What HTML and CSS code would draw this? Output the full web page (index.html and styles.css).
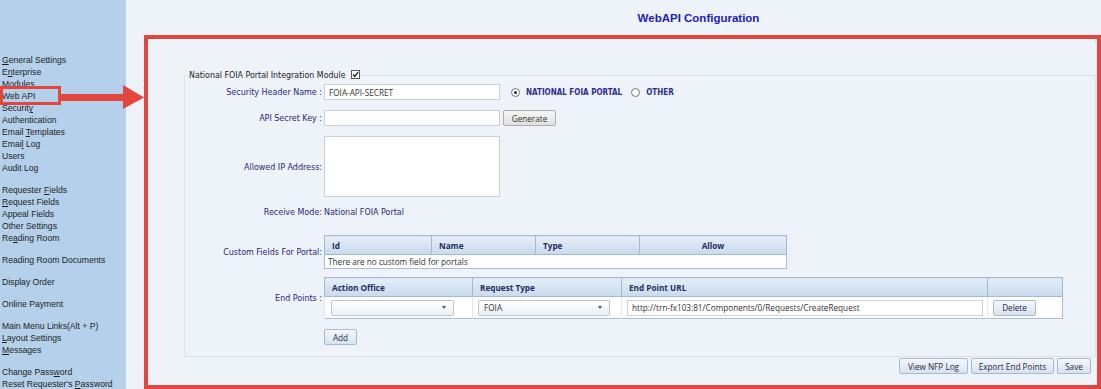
FILE: index.html
```html
<!DOCTYPE html>
<html>
<head>
    <meta charset="UTF-8">
    <title>WebAPI Configuration</title>
    <link rel="stylesheet" href="styles.css">
</head>
<body>
<div class="page">
    <nav class="sidebar">
        <ul class="menu-group">
            <li><u>G</u>eneral Settings</li>
            <li>E<u>n</u>terprise</li>
            <li>Modules</li>
            <li>Web API</li>
            <li>Securit<u>y</u></li>
            <li>Authentication</li>
            <li>Email <u>T</u>emplates</li>
            <li>Emai<u>l</u> Log</li>
            <li>Users</li>
            <li>Audit Log</li>
        </ul>
        <ul class="menu-group">
            <li>Requester <u>F</u>ields</li>
            <li><u>R</u>equest Fields</li>
            <li>Appeal Fields</li>
            <li>Other Settings</li>
            <li>Re<u>a</u>ding Room</li>
        </ul>
        <ul class="menu-group">
            <li>Reading Room Documents</li>
        </ul>
        <ul class="menu-group">
            <li>Display Order</li>
        </ul>
        <ul class="menu-group">
            <li>Online Payment</li>
        </ul>
        <ul class="menu-group">
            <li>Main Menu Links(Alt + P)</li>
            <li><u>L</u>ayout Settings</li>
            <li><u>M</u>essages</li>
        </ul>
        <ul class="menu-group">
            <li>Change Pass<u>w</u>ord</li>
            <li>Reset Requester's <u>P</u>assword</li>
        </ul>
    </nav>

    <main class="main">
        <h1 class="page-title">WebAPI Configuration</h1>

        <div class="content">
            <fieldset class="module">
                <legend>National FOIA Portal Integration Module
                    <svg class="checkbox" width="9" height="9" viewBox="0 0 9 9">
                        <rect x="0.5" y="0.5" width="8" height="8" fill="#fff" stroke="#555"/>
                        <path d="M2 4.5 L3.8 6.5 L7 2.2" fill="none" stroke="#222" stroke-width="1.3"/>
                    </svg>
                </legend>

                <div class="form-row row-header">
                    <label class="form-label">Security Header Name :</label>
                    <div class="control">
                        <input class="text-input" type="text" value="FOIA-API-SECRET">
                        <span class="radio-group">
                            <span class="radio checked"></span>
                            <span class="radio-text">NATIONAL FOIA PORTAL</span>
                            <span class="radio"></span>
                            <span class="radio-text">OTHER</span>
                        </span>
                    </div>
                </div>

                <div class="form-row row-key">
                    <label class="form-label">API Secret Key :</label>
                    <div class="control">
                        <input class="text-input" type="text">
                        <button class="btn btn-gray">Generate</button>
                    </div>
                </div>

                <div class="form-row row-ip">
                    <label class="form-label">Allowed IP Address:</label>
                    <div class="control">
                        <textarea class="text-area"></textarea>
                    </div>
                </div>

                <div class="form-row row-mode">
                    <label class="form-label">Receive Mode:</label>
                    <div class="control value-text">National FOIA Portal</div>
                </div>

                <div class="form-row row-fields">
                    <label class="form-label">Custom Fields For Portal:</label>
                    <div class="control">
                        <table class="grid grid-fields">
                            <colgroup>
                                <col style="width: 107px">
                                <col style="width: 104px">
                                <col style="width: 104px">
                                <col style="width: 147px">
                            </colgroup>
                            <tr>
                                <th>Id</th>
                                <th>Name</th>
                                <th>Type</th>
                                <th class="center">Allow</th>
                            </tr>
                            <tr>
                                <td colspan="4" class="empty-cell">There are no custom field for portals</td>
                            </tr>
                        </table>
                    </div>
                </div>

                <div class="form-row row-endpoints">
                    <label class="form-label">End Points :</label>
                    <div class="control">
                        <table class="grid grid-endpoints">
                            <colgroup>
                                <col style="width: 148px">
                                <col style="width: 149px">
                                <col style="width: 366px">
                                <col style="width: 75px">
                            </colgroup>
                            <tr>
                                <th>Action Office</th>
                                <th>Request Type</th>
                                <th>End Point URL</th>
                                <th></th>
                            </tr>
                            <tr>
                                <td><div class="select select-office"><span></span><i class="caret"></i></div></td>
                                <td><div class="select select-type"><span>FOIA</span><i class="caret"></i></div></td>
                                <td><input class="text-input url-input" type="text" value="http://trn-fx103:81/Components/0/Requests/CreateRequest"></td>
                                <td><button class="btn btn-blue btn-delete">Delete</button></td>
                            </tr>
                        </table>
                    </div>
                </div>

                <div class="form-row row-add">
                    <span></span>
                    <div class="control">
                        <button class="btn btn-blue btn-add">Add</button>
                    </div>
                </div>
            </fieldset>

            <div class="actions">
                <button class="btn btn-blue btn-log">View NFP Log</button>
                <button class="btn btn-blue btn-export">Export End Points</button>
                <button class="btn btn-blue btn-save">Save</button>
            </div>
        </div>
    </main>

    <!-- annotation overlay -->
    <div class="callout-frame"></div>
    <svg class="callout-arrow" width="150" height="120" viewBox="0 0 150 120">
        <rect x="1.5" y="87.5" width="58" height="16" fill="none" stroke="#e2463d" stroke-width="3"/>
        <rect x="60" y="94" width="64" height="7" fill="#e2463d"/>
        <polygon points="123,85 144,97.5 123,109" fill="#e2463d"/>
    </svg>
</div>
</body>
</html>
```

FILE: styles.css
```css
* {
    box-sizing: border-box;
}

body {
    margin: 0;
    background-color: #edf3f8;
    font-family: "Liberation Sans", Arial, sans-serif;
}

.page {
    position: relative;
    display: flex;
    height: 389px;
    overflow: hidden;
}

/* left menu */
.sidebar {
    flex: none;
    width: 126px;
    background-color: #b4d0ea;
    padding: 54px 0 0 2px;
    font-size: 8.6px;
    line-height: 12px;
    color: #1e1e1e;
}

.menu-group {
    list-style: none;
    margin: 0 0 10px;
    padding: 0;
    white-space: nowrap;
}

.main {
    flex: 1;
    min-width: 0;
}

.page-title {
    margin: 0;
    height: 36px;
    line-height: 36px;
    padding-left: 170px;
    text-align: center;
    font-size: 11.5px;
    font-weight: bold;
    color: #1c1cc0;
}

.content {
    margin: 34px 5px 0 58px;
}

/* integration module panel */
.module {
    margin: 0;
    padding: 0 4px 11px;
    border: 1px solid #dbe3ea;
    min-width: 0;
}

.module legend {
    padding: 0;
    font-family: "DejaVu Sans Condensed", "DejaVu Sans", sans-serif;
    font-size: 8.8px;
    line-height: 10px;
    color: #222;
}

.checkbox {
    vertical-align: -1px;
    margin-left: 3px;
}

.form-row {
    display: grid;
    grid-template-columns: 133px 1fr;
    column-gap: 2px;
    align-items: center;
}

.form-label {
    text-align: right;
    font-family: "DejaVu Sans Condensed", "DejaVu Sans", sans-serif;
    font-size: 8.9px;
    color: #28287f;
    white-space: nowrap;
}

.control {
    display: flex;
    align-items: center;
}

.row-header { margin-top: 4px; }
.row-key { margin-top: 10px; }
.row-ip { margin-top: 10px; }
.row-mode { margin-top: 8px; height: 14px; }
.row-fields { margin-top: 16px; }
.row-endpoints { margin-top: 8px; }
.row-add { margin-top: 10px; }

.text-input,
.text-area {
    width: 176px;
    height: 16px;
    margin: 0;
    padding: 0 4px;
    border: 1px solid #c8d1da;
    background-color: #fff;
    font-family: "Open Sans", sans-serif;
    font-size: 8.2px;
    color: #333;
    outline: none;
}

.text-area {
    height: 61px;
    resize: none;
}

.value-text {
    font-family: "DejaVu Sans Condensed", "DejaVu Sans", sans-serif;
    font-size: 8.9px;
    color: #28287f;
}

/* radio choice */
.radio-group {
    display: flex;
    align-items: center;
    margin-left: 11px;
}

.radio {
    width: 9px;
    height: 9px;
    border: 1px solid #777;
    border-radius: 50%;
    background-color: #fff;
    position: relative;
    margin-right: 6px;
}

.radio.checked::after {
    content: "";
    position: absolute;
    left: 2px;
    top: 2px;
    width: 3px;
    height: 3px;
    border-radius: 50%;
    background-color: #222;
}

.radio-text {
    font-family: "DejaVu Sans Condensed", "DejaVu Sans", sans-serif;
    font-size: 8px;
    font-weight: bold;
    color: #2d2d96;
    margin-right: 9px;
}

/* buttons */
.btn {
    height: 16px;
    padding: 0 6px;
    border: 1px solid #a6b9d1;
    border-radius: 2px;
    background: linear-gradient(#f5f8fc, #d6e2f0);
    font-family: "Open Sans", sans-serif;
    font-size: 8.2px;
    color: #1f2a44;
    cursor: pointer;
}

.btn-gray {
    margin-left: 3px;
    width: 53px;
    border-color: #adadad;
    background: linear-gradient(#f7f7f7, #e0e0e0);
    color: #333;
}

.btn-add { width: 33px; }
.btn-delete { width: 43px; }
.btn-log { width: 69px; }
.btn-export { width: 83px; }
.btn-save { width: 34px; }

/* grids */
.grid {
    border-collapse: collapse;
    table-layout: fixed;
    background-color: #fff;
    border: 1px solid #a9bfd8;
}

.grid-fields { width: 462px; }
.grid-endpoints { width: 738px; }

.grid th {
    height: 19px;
    padding: 0 7px;
    background: linear-gradient(#e6eef8, #c8daee);
    border: 1px solid #a3bad6;
    text-align: left;
    font-family: "Open Sans", sans-serif;
    font-size: 8.2px;
    font-weight: bold;
    color: #1f2e5e;
}

.grid th.center {
    text-align: center;
}

.grid td {
    padding: 0;
    font-family: "Open Sans", sans-serif;
    font-size: 8.2px;
    color: #333;
}

.empty-cell {
    height: 14px;
    padding-left: 3px !important;
}

.grid-endpoints td {
    height: 22px;
    padding-left: 5px;
    border-left: 1px solid #e2e8ef;
}

.grid-endpoints td:first-child {
    padding-left: 6px;
}

.url-input {
    width: 356px;
}

.select {
    display: flex;
    align-items: center;
    justify-content: space-between;
    height: 16px;
    padding: 0 7px 0 5px;
    border: 1px solid #b9c7d6;
    border-radius: 2px;
    background: linear-gradient(#ffffff, #eaf0f6);
    font-family: "Open Sans", sans-serif;
    font-size: 8.2px;
    color: #333;
}

.select-office { width: 123px; }
.select-type { width: 132px; }

.caret {
    width: 0;
    height: 0;
    border-left: 2.5px solid transparent;
    border-right: 2.5px solid transparent;
    border-top: 3px solid #555;
}

.actions {
    display: flex;
    justify-content: flex-end;
    gap: 3px;
    margin-top: 1px;
    padding-right: 5px;
}

/* red annotation */
.callout-frame {
    position: absolute;
    left: 144px;
    top: 35px;
    width: 957px;
    height: 354px;
    border: 4px solid #e2463d;
    pointer-events: none;
}

.callout-arrow {
    position: absolute;
    left: 0;
    top: 0;
    pointer-events: none;
}
```
